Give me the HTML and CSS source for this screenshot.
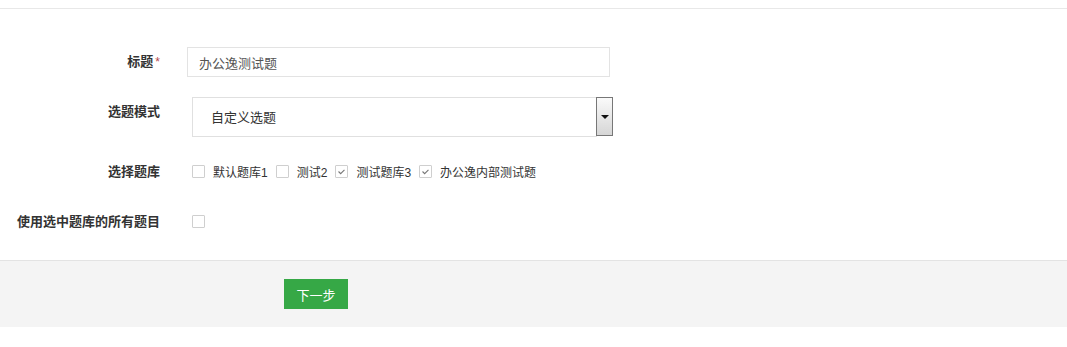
FILE: index.html
```html
<!DOCTYPE html>
<html lang="zh-CN">
<head>
  <meta charset="UTF-8" />
  <title>选题</title>
  <link rel="stylesheet" href="styles.css">
</head>
<body>
  <div class="topbar"></div>

  <div class="form">
    <div class="row">
      <label class="label">标题<span class="req">*</span></label>
      <div class="field">
        <input class="text" value="办公逸测试题" />
      </div>
    </div>

    <div class="row">
      <label class="label">选题模式</label>
      <div class="field indent">
        <div class="select">
          <div class="select-box">自定义选题</div>
          <div class="select-btn"><span class="arrow"></span></div>
        </div>
      </div>
    </div>

    <div class="row">
      <label class="label">选择题库</label>
      <div class="field indent checks">
        <span class="check"><span class="box"></span>默认题库1</span>
        <span class="check"><span class="box"></span>测试2</span>
        <span class="check"><span class="box on"><svg viewBox="0 0 13 13"><polyline points="3,6.5 5.5,9 10,4.5" /></svg></span>测试题库3</span>
        <span class="check"><span class="box on"><svg viewBox="0 0 13 13"><polyline points="3,6.5 5.5,9 10,4.5" /></svg></span>办公逸内部测试题</span>
      </div>
    </div>

    <div class="row">
      <label class="label">使用选中题库的所有题目</label>
      <div class="field indent checks">
        <span class="check"><span class="box"></span></span>
      </div>
    </div>
  </div>

  <div class="footer">
    <button class="btn">下一步</button>
  </div>
</body>
</html>
```

FILE: styles.css
```css
body { margin: 0; background: #fff; font-family: "Liberation Sans", "Noto Sans CJK SC", sans-serif; color: #333; }
.topbar { height: 8px; border-bottom: 1px solid #e8e8e8; }
.form { padding: 38px 0 23px; }
.row { display: flex; align-items: flex-start; margin-bottom: 20px; }
.row:last-child { margin-bottom: 0; }
.label { width: 160px; flex: none; text-align: right; font-size: 13px; font-weight: bold; line-height: 30px; color: #333; }
.req { color: #b5474c; font-weight: normal; font-size: 12px; margin-left: 2px; }
.field { padding-left: 27px; }
.field.indent { padding-left: 32px; }
.text { box-sizing: border-box; width: 423px; height: 30px; border: 1px solid #e3e3e3; padding: 0 11px; font-family: inherit; font-size: 13px; color: #555; outline: none; }
.select { display: flex; align-items: flex-start; }
.select-box { box-sizing: border-box; width: 405px; height: 40px; border: 1px solid #e0e0e0; padding-left: 18px; font-size: 13px; line-height: 40px; color: #333; }
.select-btn { box-sizing: border-box; width: 17px; height: 39px; margin-left: -1px; border: 1px solid #777; background: linear-gradient(#fafafa, #d6d6d6); display: flex; align-items: center; justify-content: center; }
.arrow { width: 0; height: 0; border-left: 4px solid transparent; border-right: 4px solid transparent; border-top: 4px solid #111; margin-top: 1px; }
.checks { display: flex; align-items: center; height: 28px; gap: 8px; font-size: 12px; }
.check { display: flex; align-items: center; gap: 8px; }
.box { box-sizing: border-box; width: 13px; height: 13px; border: 1px solid #cfcfcf; border-radius: 1px; background: #fff; display: flex; }
.box svg { width: 11px; height: 11px; }
.box polyline { fill: none; stroke: #777; stroke-width: 1.3; }
.footer { border-top: 1px solid #e3e3e3; background: #f4f4f4; height: 67px; padding: 18px 0 0 284px; box-sizing: border-box; }
.btn { width: 64px; height: 30px; border: none; background: #36a846; color: #fff; font-family: inherit; font-size: 13px; padding: 0; cursor: pointer; }
.btn:hover { background: #2e9a3d; }
```
